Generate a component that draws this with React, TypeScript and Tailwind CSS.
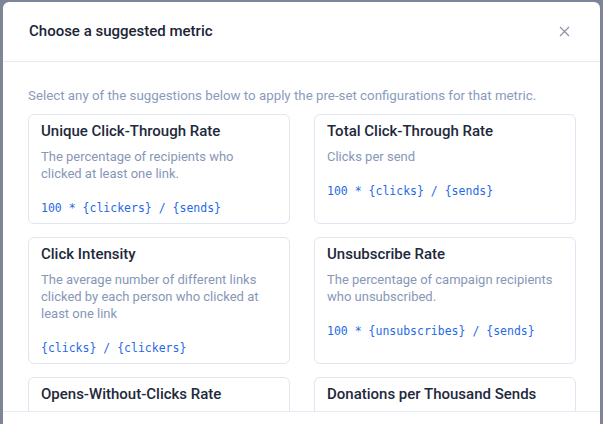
import React from "react";

const METRICS: { name: string; description: string; formula: string }[] = [
  {
    name: "Unique Click-Through Rate",
    description: "The percentage of recipients who clicked at least one link.",
    formula: "100 * {clickers} / {sends}",
  },
  {
    name: "Total Click-Through Rate",
    description: "Clicks per send",
    formula: "100 * {clicks} / {sends}",
  },
  {
    name: "Click Intensity",
    description: "The average number of different links clicked by each person who clicked at least one link",
    formula: "{clicks} / {clickers}",
  },
  {
    name: "Unsubscribe Rate",
    description: "The percentage of campaign recipients who unsubscribed.",
    formula: "100 * {unsubscribes} / {sends}",
  },
  {
    name: "Opens-Without-Clicks Rate",
    description: "The percentage of recipients who opened the email but did not click any link.",
    formula: "100 * ({openers} - {clickers}) / {sends}",
  },
  {
    name: "Donations per Thousand Sends",
    description: "Total number of donations for every thousand emails sent.",
    formula: "1000 * {donations} / {sends}",
  },
];

export default function App() {
  return (
    <div className="relative h-[424px] w-[603px] overflow-hidden bg-[#7d8596] font-['Roboto',sans-serif]">
      {/* Modal */}
      <div className="absolute left-[3px] top-[2px] flex h-[480px] w-[597px] flex-col rounded-[6px] bg-white">
        <div className="flex h-[60px] shrink-0 items-center justify-between border-b border-[#e6ebf3] pl-[26px] pr-[30px]">
          <h2 className="text-[15px] font-medium text-[#1b2536]">Choose a suggested metric</h2>
          <svg width="11" height="11" viewBox="0 0 11 11" className="text-[#8b93a3]">
            <path d="M1 1L10 10M10 1L1 10" stroke="currentColor" strokeWidth="1.2" />
          </svg>
        </div>

        <div className="h-[349px] shrink-0 overflow-hidden pl-[25px] pr-[24px] pt-[24px]">
          <p className="text-[13.3px] leading-[20px] text-[#8a9bbd]">
            Select any of the suggestions below to apply the pre-set configurations for that metric.
          </p>
          <div className="mt-[8px] grid grid-cols-2 gap-x-[24px] gap-y-[13px]">
            {METRICS.map((m) => (
              <div key={m.name} className="rounded-[6px] border border-[#dfe6f1] px-[12px] pb-[6px] pt-[6px]">
                <h3 className="text-[15px] font-medium leading-[20px] text-[#1e293b]">{m.name}</h3>
                <p className="mt-[7px] text-[13px] leading-[17px] text-[#8797b8]">{m.description}</p>
                <p className="mt-[18px] font-['DejaVu_Sans_Mono',monospace] text-[11.5px] leading-[17px] text-[#1f6ae6]">
                  {m.formula}
                </p>
              </div>
            ))}
          </div>
        </div>

        <div className="h-[70px] shrink-0 border-t border-[#e6ebf3]" />
      </div>
    </div>
  );
}
